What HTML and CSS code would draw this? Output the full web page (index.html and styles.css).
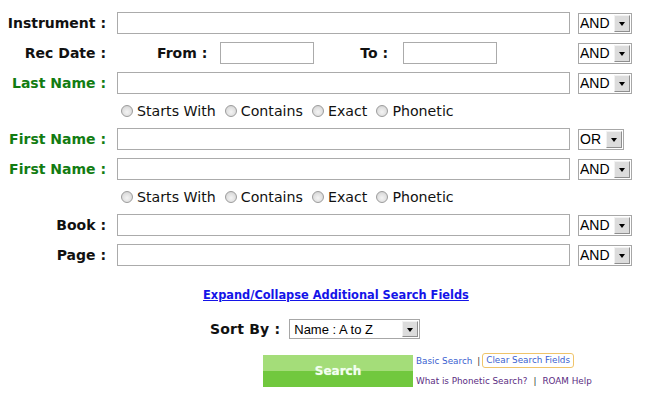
FILE: index.html
```html
<!DOCTYPE html>
<html>
<head>
<meta charset="utf-8">
<link rel="stylesheet" href="styles.css">
</head>
<body>
<div class="form">
  <div class="row">
    <label class="lbl">Instrument :</label>
    <div class="field"><input class="txt wide" type="text"></div>
    <span class="sel"><select class="s54"><option>AND</option></select><span class="arrow"></span></span>
  </div>
  <div class="row">
    <label class="lbl">Rec Date :</label>
    <div class="field dates">
      <span class="dlbl from">From :</span>
      <input class="txt date" type="text">
      <span class="dlbl to">To :</span>
      <input class="txt date" type="text">
    </div>
    <span class="sel"><select class="s54"><option>AND</option></select><span class="arrow"></span></span>
  </div>
  <div class="row">
    <label class="lbl green">Last Name :</label>
    <div class="field"><input class="txt wide" type="text"></div>
    <span class="sel"><select class="s54"><option>AND</option></select><span class="arrow"></span></span>
  </div>
  <div class="row radios">
    <div class="field opts">
      <label class="opt"><input type="radio" name="m1"><span>Starts With</span></label>
      <label class="opt"><input type="radio" name="m1"><span>Contains</span></label>
      <label class="opt"><input type="radio" name="m1"><span>Exact</span></label>
      <label class="opt"><input type="radio" name="m1"><span>Phonetic</span></label>
    </div>
  </div>
  <div class="row">
    <label class="lbl green">First Name :</label>
    <div class="field"><input class="txt wide" type="text"></div>
    <span class="sel"><select class="s46"><option>OR</option></select><span class="arrow"></span></span>
  </div>
  <div class="row">
    <label class="lbl green">First Name :</label>
    <div class="field"><input class="txt wide" type="text"></div>
    <span class="sel"><select class="s54"><option>AND</option></select><span class="arrow"></span></span>
  </div>
  <div class="row radios">
    <div class="field opts">
      <label class="opt"><input type="radio" name="m2"><span>Starts With</span></label>
      <label class="opt"><input type="radio" name="m2"><span>Contains</span></label>
      <label class="opt"><input type="radio" name="m2"><span>Exact</span></label>
      <label class="opt"><input type="radio" name="m2"><span>Phonetic</span></label>
    </div>
  </div>
  <div class="row">
    <label class="lbl">Book :</label>
    <div class="field"><input class="txt wide" type="text"></div>
    <span class="sel"><select class="s54"><option>AND</option></select><span class="arrow"></span></span>
  </div>
  <div class="row">
    <label class="lbl">Page :</label>
    <div class="field"><input class="txt wide" type="text"></div>
    <span class="sel"><select class="s54"><option>AND</option></select><span class="arrow"></span></span>
  </div>

  <div class="expand"><a href="#">Expand/Collapse Additional Search Fields</a></div>

  <div class="sort">
    <span class="slbl">Sort By :</span>
    <span class="sel sortsel"><select class="s131"><option>Name : A to Z</option></select><span class="arrow"></span></span>
  </div>

  <div class="actions">
    <button class="btn" type="button">Search</button>
    <div class="links">
      <div class="l1"><a class="blue" href="#">Basic Search</a><span class="bar1">|</span><a class="clear" href="#">Clear Search Fields</a></div>
      <div class="l2"><a class="purple" href="#">What is Phonetic Search?</a><span class="bar2">|</span><a class="purple" href="#">ROAM Help</a></div>
    </div>
  </div>
</div>
</body>
</html>
```

FILE: styles.css
```css
body {
  margin: 0;
  background: #fff;
  font-family: "DejaVu Sans", Verdana, sans-serif;
  color: #000;
}
.form {
  padding-top: 8px;
}
.row {
  display: flex;
  align-items: center;
  height: 30px;
}
.row.radios {
  height: 26px;
}
.lbl {
  width: 106px;
  flex: none;
  text-align: right;
  font-weight: bold;
  font-size: 14px;
  color: #111;
}
.lbl.green {
  color: #127c12;
}
.field {
  width: 453px;
  flex: none;
  margin-left: 11px;
  display: flex;
  align-items: center;
}
.radios .field {
  margin-left: 117px;
}
.txt {
  height: 22px;
  box-sizing: border-box;
  border: 1px solid #ababab;
  margin: 0;
  padding: 0 2px;
  background: #fff;
}
.wide {
  width: 453px;
}
.date {
  width: 94px;
}
.dlbl {
  font-weight: bold;
  font-size: 14px;
  color: #111;
}
.from {
  margin-left: 40px;
  margin-right: 13px;
}
.to {
  margin-left: 46px;
  margin-right: 15px;
}
.sel {
  position: relative;
  display: inline-block;
  margin-left: 8px;
  height: 21px;
}
.sel select {
  appearance: none;
  -webkit-appearance: none;
  box-sizing: border-box;
  height: 21px;
  margin: 0;
  border: 1px solid #a7a7a7;
  border-radius: 0;
  background: #fff;
  font-family: "Liberation Sans", Arial, sans-serif;
  font-size: 14px;
  color: #000;
  padding: 0 0 0 1px;
  display: block;
}
.s54 { width: 54px; }
.s46 { width: 46px; }
.s131 {
  width: 131px;
  font-size: 13px !important;
  height: 20px !important;
  padding-left: 4px !important;
}
.sortsel {
  height: 20px;
  margin-left: 9px;
}
.arrow {
  position: absolute;
  right: 2px;
  top: 2px;
  width: 16px;
  height: 17px;
  box-sizing: border-box;
  background: #dcdcdc;
  border-top: 1px solid #f2f2f2;
  border-left: 1px solid #f2f2f2;
  border-right: 1px solid #8e8e8e;
  border-bottom: 1px solid #8e8e8e;
  pointer-events: none;
}
.sortsel .arrow {
  height: 16px;
}
.arrow::after {
  content: "";
  position: absolute;
  left: 4px;
  top: 6px;
  border-left: 3.5px solid transparent;
  border-right: 3.5px solid transparent;
  border-top: 4px solid #000;
}
.opts {
  padding-left: 4px;
}
.opt {
  display: flex;
  align-items: center;
  font-size: 14.2px;
  margin-right: 9px;
  color: #111;
}
.opt input {
  appearance: none;
  -webkit-appearance: none;
  width: 12px;
  height: 12px;
  margin: 0 4px 0 0;
  border: 1px solid #9c9c9c;
  border-radius: 50%;
  background: radial-gradient(circle at 50% 60%, #f4f4f4 0%, #e0e0e0 55%, #c8c8c8 100%);
  box-sizing: border-box;
}
.expand {
  margin-top: 16px;
  padding-left: 203px;
  line-height: 16px;
}
.expand a {
  font-size: 11.4px;
  font-weight: bold;
  color: #1414e8;
  text-decoration: underline;
}
.sort {
  margin-top: 14px;
  display: flex;
  align-items: center;
  height: 24px;
  padding-left: 210px;
}
.slbl {
  font-weight: bold;
  font-size: 14px;
  color: #111;
  letter-spacing: 0.2px;
}
.actions {
  margin-top: 14px;
  display: flex;
  align-items: flex-start;
  padding-left: 263px;
}
.btn {
  width: 150px;
  height: 32px;
  border: 0;
  margin: 0;
  padding: 0;
  background: linear-gradient(#a4dd79 0, #a4dd79 50%, #71c83e 50%, #71c83e 100%);
  color: #f2fff0;
  font-family: "DejaVu Sans", Verdana, sans-serif;
  font-weight: bold;
  font-size: 12px;
  text-shadow: 0 0 1px #cfe9c0;
}
.links {
  margin-left: 3px;
  margin-top: -2px;
  font-size: 8.8px;
}
.links a {
  text-decoration: none;
}
.l1 {
  display: flex;
  align-items: center;
  height: 15px;
}
.blue, .clear {
  color: #3a5fd0;
}
.bar1 {
  margin: 0 2px 0 5px;
  color: #333;
}
.clear {
  border: 1px solid #f0c46a;
  border-radius: 3px;
  height: 15px;
  box-sizing: border-box;
  padding: 0 3px;
  line-height: 13px;
}
.l2 {
  margin-top: 8px;
  display: flex;
  align-items: center;
}
.purple {
  color: #5b2c82;
}
.bar2 {
  margin: 0 6px;
  color: #333;
}
```
